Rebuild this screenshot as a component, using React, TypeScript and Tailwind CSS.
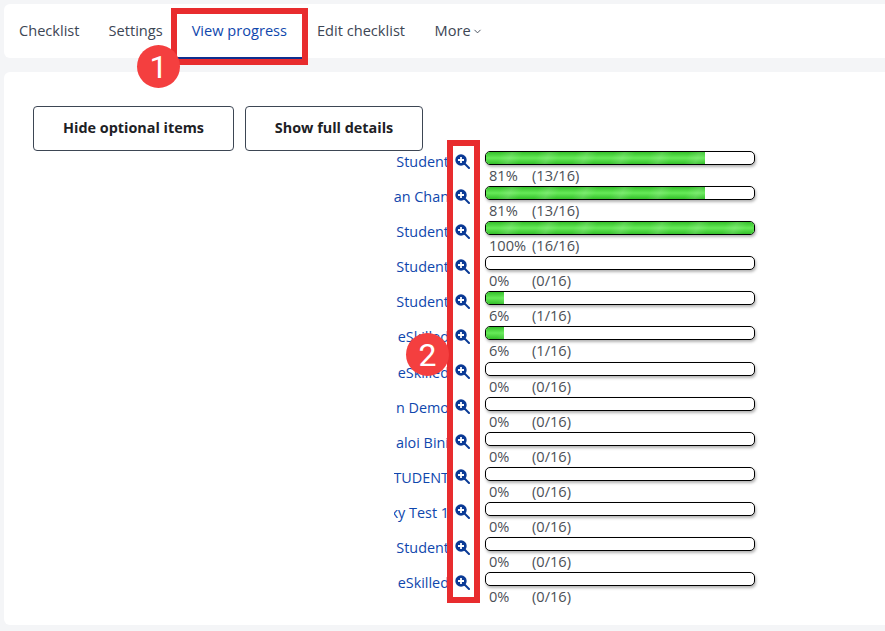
import { ChevronDown } from 'lucide-react'

const rows = [
    { name: 'Student', pct: 81, count: '13/16', fill: 220 },
    { name: 'an Chan', pct: 81, count: '13/16', fill: 220 },
    { name: 'Student', pct: 100, count: '16/16', fill: 270 },
    { name: 'Student', pct: 0, count: '0/16', fill: 0 },
    { name: 'Student', pct: 6, count: '1/16', fill: 19 },
    { name: 'eSkilled', pct: 6, count: '1/16', fill: 19 },
    { name: 'eSkilled', pct: 0, count: '0/16', fill: 0 },
    { name: 'n Demo', pct: 0, count: '0/16', fill: 0 },
    { name: 'aloi Bini', pct: 0, count: '0/16', fill: 0 },
    { name: 'TUDENT', pct: 0, count: '0/16', fill: 0 },
    { name: 'ky Test 1', pct: 0, count: '0/16', fill: 0 },
    { name: 'Student', pct: 0, count: '0/16', fill: 0 },
    { name: 'eSkilled', pct: 0, count: '0/16', fill: 0 }
]

const tabs = ['Checklist', 'Settings', 'View progress', 'Edit checklist']

const Badge = ({ n, className }: { n: string, className: string }) => (
    <div className={`absolute w-[43px] h-[43px] rounded-full bg-[#f43f3f] text-white flex items-center justify-center text-[32px] font-['Roboto',sans-serif] ${className}`}>
        {n}
    </div>
)

// solid lens with a white plus, the FontAwesome outline one is too thin here
const ZoomIcon = () => (
    <svg viewBox="0 0 15 15" className="w-[15px] h-[15px] -mt-[2px]">
        <line x1="9.5" y1="9.5" x2="14" y2="14" stroke="#0a3a96" strokeWidth="2" strokeLinecap="round" />
        <circle cx="6" cy="6" r="5.7" fill="#0a3a96" />
        <path d="M6 3v6M3 6h6" stroke="#ffffff" strokeWidth="1.8" />
    </svg>
)

const ProgressRow = ({ name, pct, count, fill }: { name: string, pct: number, count: string, fill: number }) => (
    <div className="flex h-[35.1px]">
        <div className="w-[58px] h-[22px] overflow-hidden flex justify-end text-[14.4px] leading-[22px] text-[#0f47ad] whitespace-nowrap">
            <span className="shrink-0 pr-[3px]">{name}</span>
        </div>
        <div className="w-[33px] h-[22px] flex items-center pl-[3px]">
            <ZoomIcon />
        </div>
        <div className="w-[270px]">
            <div className="h-[14px] w-[270px] bg-white border-[1.5px] border-black rounded-[5px] overflow-hidden shadow-[1px_2px_3px_rgba(0,0,0,0.3)]">
                {fill > 0 && (
                    <div
                        className="h-full bg-[repeating-linear-gradient(115deg,rgba(255,255,255,0)_0px,rgba(255,255,255,0)_14px,rgba(255,255,255,0.14)_24px,rgba(255,255,255,0)_34px),linear-gradient(180deg,#34c02a,#66ea58_50%,#34c02a)]"
                        style={{ width: fill - 1 }}
                    />
                )}
            </div>
            <div className="flex pl-[4px] text-[14.6px] leading-[20px] text-[#4b4f56]">
                <span className="w-[43px]">{pct}%</span>
                <span>({count})</span>
            </div>
        </div>
    </div>
)

export default function App() {
    return (
        <div className="relative h-[631px] overflow-hidden bg-[#f4f5f7] pt-[4px] pl-[4px] font-['Open_Sans',sans-serif]">
            <nav className="h-[54px] bg-white rounded-l-[6px] flex items-stretch pl-[0.5px] text-[14.6px]">
                {tabs.map((tab) => (
                    <div
                        key={tab}
                        className={tab === 'View progress'
                            ? 'flex items-center pl-[14.5px] pr-[15.5px] -mb-[1px] text-[#0f47ad] border-b-2 border-[#0f2f8f]'
                            : 'flex items-center px-[14.5px] text-[#3d4654]'}
                    >
                        {tab}
                    </div>
                ))}
                <div className="flex items-center gap-[1px] px-[15px] text-[#3d4654]">
                    More
                    <ChevronDown className="w-[11px] h-[11px] mt-[1px]" strokeWidth={2} />
                </div>
            </nav>

            <main className="mt-[14px] h-[553px] bg-white rounded-l-[6px] pt-[34px] pl-[29px]">
                <div className="flex gap-[11px]">
                    <button className="w-[201px] h-[45px] pb-[2px] border border-[#3d4654] rounded-[4px] text-[14.4px] font-bold text-[#1d2125]">
                        Hide optional items
                    </button>
                    <button className="w-[178px] h-[45px] pb-[2px] border border-[#3d4654] rounded-[4px] text-[14.4px] font-bold text-[#1d2125]">
                        Show full details
                    </button>
                </div>
                <div className="ml-[361px]">
                    {rows.map((row, i) => (
                        <ProgressRow key={i} {...row} />
                    ))}
                </div>
            </main>

            {/* annotations on top of the screenshot */}
            <div className="absolute left-[171px] top-[8px] w-[137px] h-[57px] border-[6px] border-[#e82c2e]" />
            <div className="absolute left-[447px] top-[140px] w-[33px] h-[463px] border-[6px] border-[#e82c2e]" />
            <Badge n="1" className="left-[137px] top-[45px]" />
            <Badge n="2" className="left-[406px] top-[333px]" />
        </div>
    )
}
